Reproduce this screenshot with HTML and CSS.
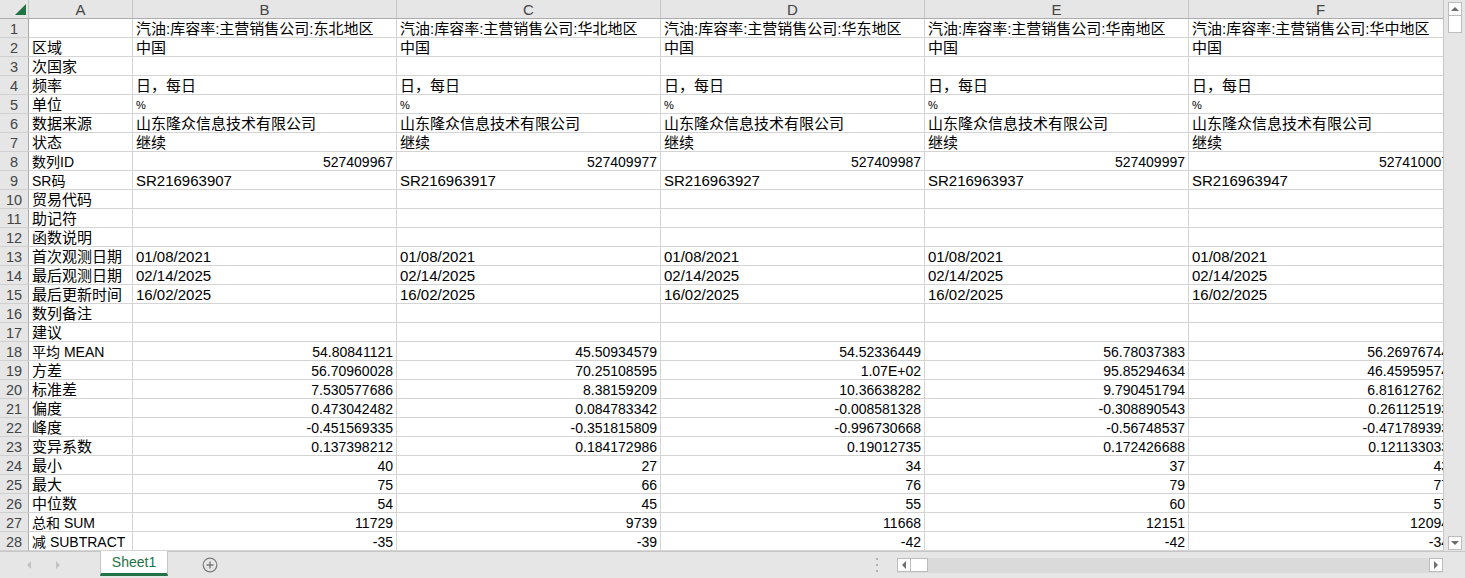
FILE: index.html
```html
<!DOCTYPE html>
<html lang="zh-CN">

<head>
    <meta charset="UTF-8">
    <title>Sheet1</title>
    <link rel="stylesheet" href="styles.css">
</head>

<body>
    <div class="app">
        <div class="main">
            <div class="sheet">
                <div class="grid">
                    <div class="corner">
                        <svg width="13" height="13" viewBox="0 0 13 13"><polygon points="1,12 12,12 12,1" fill="#217346"/></svg>
                    </div>
                    <div class="hd">A</div>
                    <div class="hd">B</div>
                    <div class="hd">C</div>
                    <div class="hd">D</div>
                    <div class="hd">E</div>
                    <div class="hd">F</div>

                    <div class="rh">1</div><div class="c"></div>
                    <div class="c">汽油:库容率:主营销售公司:东北地区</div>
                    <div class="c">汽油:库容率:主营销售公司:华北地区</div>
                    <div class="c">汽油:库容率:主营销售公司:华东地区</div>
                    <div class="c">汽油:库容率:主营销售公司:华南地区</div>
                    <div class="c">汽油:库容率:主营销售公司:华中地区</div>

                    <div class="rh">2</div><div class="c">区域</div>
                    <div class="c">中国</div><div class="c">中国</div><div class="c">中国</div><div class="c">中国</div><div class="c">中国</div>

                    <div class="rh">3</div><div class="c">次国家</div>
                    <div class="c"></div><div class="c"></div><div class="c"></div><div class="c"></div><div class="c"></div>

                    <div class="rh">4</div><div class="c">频率</div>
                    <div class="c">日，每日</div><div class="c">日，每日</div><div class="c">日，每日</div><div class="c">日，每日</div><div class="c">日，每日</div>

                    <div class="rh">5</div><div class="c">单位</div>
                    <div class="c pct">%</div><div class="c pct">%</div><div class="c pct">%</div><div class="c pct">%</div><div class="c pct">%</div>

                    <div class="rh">6</div><div class="c">数据来源</div>
                    <div class="c">山东隆众信息技术有限公司</div><div class="c">山东隆众信息技术有限公司</div><div class="c">山东隆众信息技术有限公司</div><div class="c">山东隆众信息技术有限公司</div><div class="c">山东隆众信息技术有限公司</div>

                    <div class="rh">7</div><div class="c">状态</div>
                    <div class="c">继续</div><div class="c">继续</div><div class="c">继续</div><div class="c">继续</div><div class="c">继续</div>

                    <div class="rh">8</div><div class="c lt">数列ID</div>
                    <div class="c n">527409967</div><div class="c n">527409977</div><div class="c n">527409987</div><div class="c n">527409997</div><div class="c n">527410007</div>

                    <div class="rh">9</div><div class="c lt">SR码</div>
                    <div class="c">SR216963907</div><div class="c">SR216963917</div><div class="c">SR216963927</div><div class="c">SR216963937</div><div class="c">SR216963947</div>

                    <div class="rh">10</div><div class="c">贸易代码</div>
                    <div class="c"></div><div class="c"></div><div class="c"></div><div class="c"></div><div class="c"></div>

                    <div class="rh">11</div><div class="c">助记符</div>
                    <div class="c"></div><div class="c"></div><div class="c"></div><div class="c"></div><div class="c"></div>

                    <div class="rh">12</div><div class="c">函数说明</div>
                    <div class="c"></div><div class="c"></div><div class="c"></div><div class="c"></div><div class="c"></div>

                    <div class="rh">13</div><div class="c">首次观测日期</div>
                    <div class="c">01/08/2021</div><div class="c">01/08/2021</div><div class="c">01/08/2021</div><div class="c">01/08/2021</div><div class="c">01/08/2021</div>

                    <div class="rh">14</div><div class="c">最后观测日期</div>
                    <div class="c">02/14/2025</div><div class="c">02/14/2025</div><div class="c">02/14/2025</div><div class="c">02/14/2025</div><div class="c">02/14/2025</div>

                    <div class="rh">15</div><div class="c">最后更新时间</div>
                    <div class="c">16/02/2025</div><div class="c">16/02/2025</div><div class="c">16/02/2025</div><div class="c">16/02/2025</div><div class="c">16/02/2025</div>

                    <div class="rh">16</div><div class="c">数列备注</div>
                    <div class="c"></div><div class="c"></div><div class="c"></div><div class="c"></div><div class="c"></div>

                    <div class="rh">17</div><div class="c">建议</div>
                    <div class="c"></div><div class="c"></div><div class="c"></div><div class="c"></div><div class="c"></div>

                    <div class="rh">18</div><div class="c lt">平均 MEAN</div>
                    <div class="c n">54.80841121</div><div class="c n">45.50934579</div><div class="c n">54.52336449</div><div class="c n">56.78037383</div><div class="c n">56.26976744</div>

                    <div class="rh">19</div><div class="c">方差</div>
                    <div class="c n">56.70960028</div><div class="c n">70.25108595</div><div class="c n">1.07E+02</div><div class="c n">95.85294634</div><div class="c n">46.45959574</div>

                    <div class="rh">20</div><div class="c">标准差</div>
                    <div class="c n">7.530577686</div><div class="c n">8.38159209</div><div class="c n">10.36638282</div><div class="c n">9.790451794</div><div class="c n">6.816127621</div>

                    <div class="rh">21</div><div class="c">偏度</div>
                    <div class="c n">0.473042482</div><div class="c n">0.084783342</div><div class="c n">-0.008581328</div><div class="c n">-0.308890543</div><div class="c n">0.261125193</div>

                    <div class="rh">22</div><div class="c">峰度</div>
                    <div class="c n">-0.451569335</div><div class="c n">-0.351815809</div><div class="c n">-0.996730668</div><div class="c n">-0.56748537</div><div class="c n">-0.471789393</div>

                    <div class="rh">23</div><div class="c">变异系数</div>
                    <div class="c n">0.137398212</div><div class="c n">0.184172986</div><div class="c n">0.19012735</div><div class="c n">0.172426688</div><div class="c n">0.121133033</div>

                    <div class="rh">24</div><div class="c">最小</div>
                    <div class="c n">40</div><div class="c n">27</div><div class="c n">34</div><div class="c n">37</div><div class="c n">43</div>

                    <div class="rh">25</div><div class="c">最大</div>
                    <div class="c n">75</div><div class="c n">66</div><div class="c n">76</div><div class="c n">79</div><div class="c n">77</div>

                    <div class="rh">26</div><div class="c">中位数</div>
                    <div class="c n">54</div><div class="c n">45</div><div class="c n">55</div><div class="c n">60</div><div class="c n">57</div>

                    <div class="rh">27</div><div class="c lt">总和 SUM</div>
                    <div class="c n">11729</div><div class="c n">9739</div><div class="c n">11668</div><div class="c n">12151</div><div class="c n">12094</div>

                    <div class="rh">28</div><div class="c lt">减 SUBTRACT</div>
                    <div class="c n">-35</div><div class="c n">-39</div><div class="c n">-42</div><div class="c n">-42</div><div class="c n">-34</div>
                </div>
            </div>

            <div class="vscroll">
                <div class="sbtn"><svg width="12" height="12" viewBox="0 0 12 12"><polygon points="2,8 10,8 6,4" fill="#6d6d6d"/></svg></div>
                <div class="vthumb"></div>
                <div class="vtrack"></div>
                <div class="sbtn"><svg width="12" height="12" viewBox="0 0 12 12"><polygon points="2,4 10,4 6,8" fill="#6d6d6d"/></svg></div>
            </div>
        </div>

        <div class="tabbar">
            <div class="tabnav">
                <svg width="8" height="10" viewBox="0 0 8 10"><polygon points="6,1 6,9 2,5" fill="#c2c2c2"/></svg>
                <svg width="8" height="10" viewBox="0 0 8 10"><polygon points="2,1 2,9 6,5" fill="#c2c2c2"/></svg>
            </div>
            <div class="tab">Sheet1</div>
            <div class="addsheet">
                <svg width="16" height="16" viewBox="0 0 16 16">
                    <circle cx="8" cy="8" r="6.8" fill="none" stroke="#7a7a7a" stroke-width="1.2"/>
                    <path d="M8 4.5V11.5M4.5 8H11.5" stroke="#7a7a7a" stroke-width="1.4"/>
                </svg>
            </div>
            <div class="spacer"></div>
            <div class="split">
                <svg width="4" height="16" viewBox="0 0 4 16"><rect x="1" y="1" width="2" height="2" fill="#b0b0b0"/><rect x="1" y="7" width="2" height="2" fill="#b0b0b0"/><rect x="1" y="13" width="2" height="2" fill="#b0b0b0"/></svg>
            </div>
            <div class="hscroll">
                <div class="sbtn"><svg width="12" height="12" viewBox="0 0 12 12"><polygon points="8,2 8,10 4,6" fill="#6d6d6d"/></svg></div>
                <div class="hthumb"></div>
                <div class="htrack"></div>
                <div class="sbtn"><svg width="12" height="12" viewBox="0 0 12 12"><polygon points="4,2 4,10 8,6" fill="#6d6d6d"/></svg></div>
            </div>
            <div class="corner-fill"></div>
        </div>
    </div>
</body>

</html>
```

FILE: styles.css
```css
body {
    margin: 0;
    font-family: 'Liberation Sans', 'Noto Sans CJK SC', sans-serif;
    font-size: 15px;
    color: #000;
    background-color: #fff;
}

.app {
    display: flex;
    flex-direction: column;
    width: 1465px;
    height: 578px;
    overflow: hidden;
}

.main {
    display: flex;
    height: 551px;
}

.sheet {
    flex: 1;
    min-width: 0;
    overflow: hidden;
    border-right: 1px solid #c6c6c6;
}

.grid {
    display: grid;
    grid-template-columns: 29px 104px repeat(5, 264px);
    grid-template-rows: 19px;
    grid-auto-rows: 19px;
    width: 1453px;
}

.grid > div {
    box-sizing: border-box;
    white-space: nowrap;
    overflow: hidden;
    padding-top: 1px;
    line-height: 18px;
}

.corner {
    background-color: #e6e6e6;
    border-right: 1px solid #c6c6c6;
    border-bottom: 1px solid #ababab;
    display: flex;
    align-items: flex-end;
    justify-content: flex-end;
    padding: 0 1px 2px 0;
}

.corner svg {
    display: block;
}

.hd {
    background-color: #e6e6e6;
    color: #444;
    text-align: center;
    border-right: 1px solid #c6c6c6;
    border-bottom: 1px solid #ababab;
}

.rh {
    background-color: #e6e6e6;
    color: #444;
    font-size: 14.5px;
    text-align: center;
    border-right: 1px solid #ababab;
    border-bottom: 1px solid #d0d0d0;
}

.c {
    padding-left: 3px;
    padding-right: 3px;
    border-right: 1px solid #d4d4d4;
    border-bottom: 1px solid #d4d4d4;
}

.c.n {
    font-size: 14px;
    text-align: right;
}

.c.lt {
    font-size: 14px;
}

.c.pct {
    font-size: 11px;
}

/* vertical scrollbar */
.vscroll {
    width: 21px;
    box-sizing: border-box;
    background-color: #e6e6e6;
    display: flex;
    flex-direction: column;
    align-items: center;
    padding: 2px 0 1px;
}

.sbtn {
    width: 14px;
    height: 14px;
    box-sizing: border-box;
    background-color: #fdfdfd;
    border: 1px solid #bdbdbd;
    display: flex;
    align-items: center;
    justify-content: center;
}

.sbtn svg {
    display: block;
}

.vthumb {
    width: 14px;
    height: 17px;
    box-sizing: border-box;
    background-color: #fff;
    border: 1px solid #bdbdbd;
    border-top: none;
}

.vtrack {
    flex: 1;
}

/* sheet tabs */
.tabbar {
    display: flex;
    height: 27px;
    box-sizing: border-box;
    background-color: #e6e6e6;
    border-top: 1px solid #c6c6c6;
}

.tabnav {
    width: 100px;
    display: flex;
    align-items: center;
    gap: 21px;
    padding-left: 25px;
    box-sizing: border-box;
}

.tabnav svg {
    display: block;
}

.tab {
    width: 68px;
    box-sizing: border-box;
    margin-top: -1px;
    margin-bottom: 2px;
    background-color: #fff;
    color: #217346;
    font-size: 14px;
    text-align: center;
    line-height: 22px;
    border-left: 1px solid #c6c6c6;
    border-right: 1px solid #c6c6c6;
    border-bottom: 3px solid #217346;
}

.addsheet {
    display: flex;
    align-items: center;
    padding-left: 34px;
}

.addsheet svg {
    display: block;
}

.spacer {
    flex: 1;
}

.split {
    display: flex;
    align-items: center;
    padding-right: 18px;
}

.hscroll {
    width: 546px;
    display: flex;
    align-items: center;
    align-self: center;
    height: 15px;
    background-color: #dadada;
}

.hthumb {
    width: 17px;
    height: 14px;
    box-sizing: border-box;
    background-color: #fff;
    border: 1px solid #bdbdbd;
    border-left: none;
}

.htrack {
    flex: 1;
}

.corner-fill {
    width: 22px;
}
```
